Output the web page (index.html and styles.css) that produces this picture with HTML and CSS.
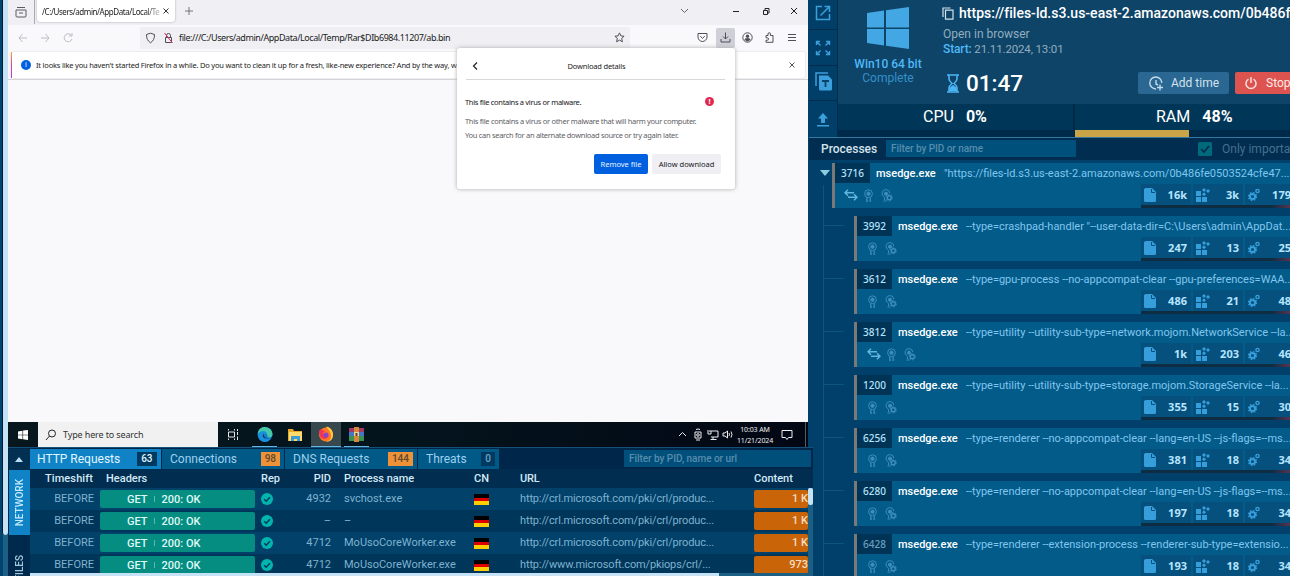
FILE: index.html
```html
<!DOCTYPE html>
<html lang="en">
<head>
<meta charset="utf-8">
<title>Sandbox analysis</title>
<link rel="stylesheet" href="styles.css">
</head>
<body>
<svg class="defs" width="0" height="0">
<symbol id="award" viewBox="0 0 11 13"><g fill="none" stroke="currentColor"><circle cx="5.500" cy="4.700" r="3.900"/><circle cx="5.500" cy="4.700" r="1.700" fill="currentColor"/><path d="M3.800 8.500v2.500M7.200 8.500v2.500M3 12h2M6.200 12h2" stroke-width="1.300"/></g></symbol>
<symbol id="awardgear" viewBox="0 0 12 13"><g fill="none" stroke="currentColor"><path d="M3.500 8.100A3.900 3.900 0 1 1 8.800 4.200M3.500 8.500v2.500M2.500 12h3"/><circle cx="5" cy="4.700" r="1.600" fill="currentColor"/><circle cx="8.300" cy="8.800" r="2" stroke-width="1.400"/><circle cx="8.300" cy="8.800" r="3.100" stroke-width="1" stroke-dasharray="1.620 1.620"/></g></symbol>
<symbol id="arrows" viewBox="0 0 14 12"><path d="M10 3.700H1M4 .7l-3 3 3 3M4 8.300h9M10 5.300l3 3-3 3" fill="none" stroke="currentColor" stroke-width="1.500"/></symbol>
<symbol id="file" viewBox="0 0 12 14"><path d="M2 0h6l4 4v8.500a1.500 1.500 0 0 1-1.500 1.500H1.500A1.500 1.500 0 0 1 0 12.500V1.500Q0 0 2 0z" fill="#369fdb"/><path d="M7.500 1v3.500H11" fill="none" stroke="#06507d"/></symbol>
<symbol id="blocks" viewBox="0 0 14 14"><g fill="#369fdb"><path d="M0 3h5v5H0zM0 9h5v5H0zM6 9h5v5H6z"/><path d="M8 0l2 2-2 2-2-2zM12 1l2 2-2 2-2-2zM8 4.300l2 2-2 2-2-2z"/></g></symbol>
<symbol id="gears" viewBox="0 0 12 14"><g fill="none" stroke="#369fdb"><circle cx="4.500" cy="8.500" r="2.600" stroke-width="2"/><circle cx="4.500" cy="8.500" r="4" stroke-width="1.300" stroke-dasharray="1.570 1.570"/><circle cx="9.500" cy="3" r="1.600" stroke-width="1.400"/></g></symbol>
<symbol id="check" viewBox="0 0 12 12"><circle cx="6" cy="6" r="6" fill="#00b5ad"/><path d="M3.200 6.200l2 2 3.700-4" fill="none" stroke="#003a60" stroke-width="1.500"/></symbol>
</svg>
<div class="app">
<div class="gutter"><i></i></div>
<div class="left">
 <div class="screen">
  <div class="tabstrip">
   <svg class="view" width="12" height="12" viewBox="0 0 12 12" fill="none" stroke="#5b5b66"><path d="M2 1.500h8M1 4h10v6q0 1-1 1H2q-1 0-1-1zM4 7h4"/></svg>
   <div class="tab"><span>/C:/Users/admin/AppData/Local/Te</span><svg width="6" height="6" viewBox="0 0 6 6"><path d="M.5.5l5 5M5.500.5l-5 5" stroke="#333"/></svg></div>
   <svg class="plus" width="8" height="8" viewBox="0 0 8 8"><path d="M4 0v8M0 4h8" stroke="#777"/></svg>
   <svg class="wins" width="122" height="10" viewBox="0 0 122 10" fill="none" stroke="#222"><path d="M1 3l3.500 3.500L8 3" stroke="#666"/><path d="M53 5.500h6M83.500 4.500h4v4h-4zM85 4V2.500h4V7H88M111 2l6 6M117 2l-6 6"/></svg>
  </div>
  <div class="toolbar">
   <svg class="nav" width="56" height="12" viewBox="0 0 56 12" fill="none" stroke="#bdbdc3"><path d="M9 6H1M4.500 2L1 6l3.500 4M23 6h8M27.500 2L31 6l-3.500 4M53.500 3.500A4 4 0 1 0 54 7M54 1v3h-3"/></svg>
   <div class="urlbar">
    <svg width="30" height="12" viewBox="0 0 30 12" fill="none" stroke="#4f4f59"><path d="M4.500 1.200l4 1.300c0 4-1 6.300-4 8.300-3-2-4-4.300-4-8.300z"/><path d="M20.500 5V3.500a2 2 0 0 1 4 0V5M19.500 5.500h6v5h-6z"/><path d="M18.500 1l8 10" stroke="#e22850"/></svg>
    <span>file:///C:/Users/admin/AppData/Local/Temp/Rar$DIb6984.11207/ab.bin</span>
    <svg class="star" width="11" height="11" viewBox="0 0 11 11" fill="none" stroke="#4f4f59"><path d="M5.500.9l1.400 3 3.200.3-2.400 2.200.7 3.400-2.900-1.700-2.900 1.700.7-3.400L.9 4.200l3.200-.3z"/></svg>
   </div>
   <div class="tools">
    <svg width="11" height="11" viewBox="0 0 11 11" fill="none" stroke="#4f4f59"><path d="M1 1.500h9V5a4.500 4.500 0 0 1-9 0zM3.300 4.300l2.200 2 2.200-2"/></svg>
    <b><svg width="11" height="11" viewBox="0 0 11 11" fill="none" stroke="#4f4f59"><path d="M5.500.5v6.500M3 4.500L5.500 7 8 4.500M1 7v3h9V7"/></svg></b>
    <svg width="11" height="11" viewBox="0 0 11 11"><circle cx="5.500" cy="5.500" r="4.700" fill="none" stroke="#4f4f59"/><circle cx="5.500" cy="4.200" r="1.700" fill="#4f4f59"/><path d="M2.500 8q0-2 3-2t3 2l-3 1.500z" fill="#4f4f59"/></svg>
    <svg width="11" height="11" viewBox="0 0 11 11" fill="none" stroke="#4f4f59"><path d="M2 3.500h2V2q0-1.300 1.200-1.300T6.400 2v1.500H9v6.800H2V8.200h1.500q1-.1 1-1.200t-1-1.200H2z"/></svg>
    <svg width="11" height="11" viewBox="0 0 11 11" stroke="#4f4f59"><path d="M2 2.500h8M2 5.500h8M2 8.500h8"/></svg>
   </div>
  </div>
  <div class="notice"><i>i</i><span>It looks like you haven't started Firefox in a while. Do you want to clean it up for a fresh, like-new experience? And by the way, w</span><svg width="6" height="6" viewBox="0 0 6 6"><path d="M.5.5l5 5M5.500.5l-5 5" stroke="#555"/></svg></div>
  <div class="page"></div>
  <div class="popup">
   <div class="phead"><svg width="6" height="8" viewBox="0 0 6 8"><path d="M5 .5L1.500 4 5 7.500" fill="none" stroke="#222" stroke-width="1.200"/></svg><span>Download details</span></div>
   <div class="virus"><span>This file contains a virus or malware.</span><i>!</i></div>
   <p class="l1">This file contains a virus or other malware that will harm your computer.</p>
   <p class="l2">You can search for an alternate download source or try again later.</p>
   <div class="btns"><b>Remove file</b><b class="allow">Allow download</b></div>
  </div>
  <div class="taskbar">
   <svg class="start" width="10" height="10" viewBox="0 0 10 10" fill="#fff"><path d="M0 1.400l4.500-.7v4H0zM5.100.6L10 0v4.700H5.100zM0 5.300h4.500v4L0 8.600zM5.100 5.300H10V10l-4.900-.7z"/></svg>
   <div class="search"><svg width="12" height="12" viewBox="0 0 12 12" fill="none" stroke="#222"><circle cx="7" cy="4.500" r="3.500"/><path d="M4.500 7L1 11"/></svg><span>Type here to search</span></div>
   <svg class="icons" width="160" height="25" viewBox="0 0 160 25">
    <g fill="none" stroke="#e5e8ea"><path d="M10.500 10h6v5h-6zM10.500 7v1.500M16.500 7v1.500M10.500 16.500V18M16.500 16.500V18M19.500 7v2M19.500 10v3M19.500 14.500V18"/></g>
    <circle cx="47" cy="12.500" r="7.500" fill="#127ac6"/><path d="M40 10a7.500 7.500 0 0 1 14.500 2c0 3-2.500 4-5 3 1-4-4-5-9.500-2z" fill="#45c8a8"/><path d="M40 12c2-4 9-4 9 0-4-1-5 4-1 5 2 .5 4 0 5-1-2 5-11 6-13-2z" fill="#1a91da"/><path d="M46 11.500c-3 3 0 6 6 5q-3 1-5-1t-1-4z" fill="#072c50"/>
    <path d="M70 7h5l1 2h8v10H70z" fill="#e8a82c"/><path d="M71 10h13v9H71z" fill="#ffdb6b"/><path d="M73 14h9v5h-3v-2h-3v2h-3z" fill="#3d9bd6"/>
    <path d="M93 0h30v25H93z" fill="#37484e"/><circle cx="108" cy="12.500" r="7" fill="#ff7626"/><path d="M108 5c3-1 7 3 7 8s-4 7-7 7q6-2 5-7t-5-8z" fill="#ffcf3a"/><path d="M101 9q2-3 3-1l3 1-2 2 2 3q4 1 4-2-1 5-5 5-5-1-5-8z" fill="#f23554"/><circle cx="108" cy="13" r="2.500" fill="#8545cc"/>
    <path d="M131 6h15v5h-15z" fill="#a13b63"/><path d="M131 10h15v5h-15z" fill="#4675c5"/><path d="M131 14h15v5h-15z" fill="#399252"/><path d="M136 5h5v15h-5z" fill="#d6873c"/><path d="M136 10h5v4h-5z" fill="#ead48b"/><path d="M137.500 11h2v3h-2z" fill="#5d402d"/>
    <path d="M34 24.500h25M93 24.500h30M126 24.500h25" stroke="#64b5e4"/>
   </svg>
   <svg class="tray" width="56" height="13" viewBox="0 0 56 13" fill="none" stroke="#eee"><path d="M1 8l3.500-3.500L8 8M17 4h6v6h-6zM18 1.500q2-1 4 0M18 12h4M31 3h9v6h-7M30 2v4h3V3M35 9v2M32.500 11.500h6M45 5h2l2.500-2v7L47 8h-2zM51 5q1 1.500 0 3M53 3.500q2 3 0 6"/><circle cx="20" cy="7" r="1.300"/></svg>
   <div class="clock"><span>10:03 AM</span><span>11/21/2024</span></div>
   <svg class="note" width="12" height="12" viewBox="0 0 12 12" fill="none" stroke="#eee"><path d="M1 1.500h10v7H7.500L6 10.500 4.500 8.500H1z"/></svg>
   <i class="edge"></i>
  </div>
 </div>
 <div class="net">
  <div class="side"><div class="up"><i></i></div><div class="vt on"><span>NETWORK</span></div><div class="vt"><span>FILES</span></div></div>
  <div class="table">
   <div class="tabs"><div class="t t1 on">HTTP Requests<b>63</b></div><div class="t t2">Connections<b class="o">98</b></div><div class="t t3">DNS Requests<b class="o">144</b></div><div class="t t4">Threats<b class="z">0</b></div><div class="filter">Filter by PID, name or url</div></div>
   <div class="tr th"><span>Timeshift</span><span>Headers</span><span>Rep</span><span>PID</span><span>Process name</span><span>CN</span><span>URL</span><span>Content</span></div>
   <div class="tr"><span>BEFORE</span><span class="get"><b>GET</b><i></i><b>200: OK</b></span><svg width="12" height="12"><use href="#check"/></svg><span>4932</span><span>svchost.exe</span><em class="flag"></em><span>http://crl.microsoft.com/pki/crl/produc...</span><span class="size">1 K</span></div>
   <div class="tr"><span>BEFORE</span><span class="get"><b>GET</b><i></i><b>200: OK</b></span><svg width="12" height="12"><use href="#check"/></svg><span>–</span><span>–</span><em class="flag"></em><span>http://crl.microsoft.com/pki/crl/produc...</span><span class="size">1 K</span></div>
   <div class="tr"><span>BEFORE</span><span class="get"><b>GET</b><i></i><b>200: OK</b></span><svg width="12" height="12"><use href="#check"/></svg><span>4712</span><span>MoUsoCoreWorker.exe</span><em class="flag"></em><span>http://crl.microsoft.com/pki/crl/produc...</span><span class="size">1 K</span></div>
   <div class="tr"><span>BEFORE</span><span class="get"><b>GET</b><i></i><b>200: OK</b></span><svg width="12" height="12"><use href="#check"/></svg><span>4712</span><span>MoUsoCoreWorker.exe</span><em class="flag"></em><span>http://www.microsoft.com/pkiops/crl/...</span><span class="size">973</span></div>
   <div class="hbar"><i></i></div><div class="vbar"><i></i></div>
  </div>
 </div>
</div>
<div class="right">
 <div class="top">
  <div class="rail">
   <div><svg width="16" height="16" viewBox="0 0 16 16" fill="none" stroke="#3b9fdb" stroke-width="1.500"><path d="M7 1.500H1.500v13h13V9M9.500 1.500h5V7M14 2L5.500 10.500"/></svg></div>
   <div><svg width="16" height="16" viewBox="0 0 16 16" stroke="#3b9fdb" fill="none" stroke-width="1.400"><path d="M1.500 5V1.500H5M1.500 1.500L5.500 5.500M11 1.500h3.500V5M14.500 1.500L10.500 5.500M1.500 11v3.500H5M1.500 14.500L5.500 10.500M14.500 11v3.500H11M14.500 14.500L10.500 10.500"/></svg></div>
   <div><svg width="17" height="19" viewBox="0 0 17 19"><path d="M1 14V1h12" fill="none" stroke="#3b9fdb" stroke-width="1.500"/><path d="M4 3.500h9l4 4V17q0 1.500-1.500 1.500h-10Q4 18.500 4 17z" fill="#3b9fdb"/><path d="M7 9h7M10.500 9v6" stroke="#0a4269" stroke-width="1.800"/></svg></div>
   <div><svg width="12" height="15" viewBox="0 0 12 15" fill="#3b9fdb"><path d="M6 1l5 5.500H8V11H4V6.500H1zM0 13h12v1.500H0z"/></svg></div>
  </div>
  <div class="summary">
   <div class="info">
    <div class="os"><svg width="42" height="42" viewBox="0 0 42 42" fill="#42a7e2"><path d="M0 6l17-2.500v17H0zM19 3.200L42 0v20.500H19zM0 22h17v16.500L0 36zM19 22h23v20l-23-3.200z"/></svg><b>Win10 64 bit</b><span>Complete</span></div>
    <div class="task">
     <div class="url"><svg width="12" height="13" viewBox="0 0 12 13" fill="none" stroke="#d4e2ec" stroke-width="1.200"><path d="M1 10V1h7.500M3.500 3.200H11v9H3.500z"/></svg><span>https://files-ld.s3.us-east-2.amazonaws.com/0b486f</span></div>
     <div class="open">Open in browser</div>
     <div class="started"><b>Start:</b> 21.11.2024, 13:01</div>
     <div class="act"><svg width="12" height="19" viewBox="0 0 12 19"><path d="M0 1h12M0 18h12M2 1v4q0 2 3 4.500-3 2.500-3 4.500v4M10 1v4q0 2-3 4.500 3 2.500 3 4.500v4" stroke="#4cb5f4" stroke-width="1.600" fill="none"/><path d="M6 11q4 2 4 6H2q0-4 4-6z" fill="#4cb5f4"/></svg><strong>01:47</strong>
      <span class="btn add"><svg width="14" height="15" viewBox="0 0 14 15" fill="none" stroke="#c4dbea" stroke-width="1.400"><path d="M12.800 7A6 6 0 1 0 7 13M7 4v4l2 1M8 11.500h6M11 8.500v6"/></svg>Add time</span><span class="btn stop"><svg width="12" height="13" viewBox="0 0 12 13" fill="none" stroke="#fbdedd" stroke-width="1.500"><path d="M3.500 2.200a5 5 0 1 0 5 0M6 0v6"/></svg>Stop</span></div>
    </div>
   </div>
   <div class="meters"><div class="m cpu"><span>CPU</span><b>0%</b></div><div class="m ram"><span>RAM</span><b>48%</b></div></div>
  </div>
 </div>
 <div class="ph"><b>Processes</b><span class="pf">Filter by PID or name</span><svg width="14" height="14" viewBox="0 0 14 14"><rect width="14" height="14" rx="1.500" fill="#006a7c"/><path d="M3 7l3 3 5-6" fill="none" stroke="#00294a" stroke-width="1.600"/></svg><span class="imp">Only important</span></div>
 <div class="tree">
  <i class="caret"></i><i class="trunk"></i>
  <div class="node root"><div class="n1"><span class="pid">3716</span><b>msedge.exe</b><span class="cmd">"https://files-ld.s3.us-east-2.amazonaws.com/0b486fe0503524cfe47...</span></div><div class="n2"><svg class="ar" width="14" height="12"><use href="#arrows"/></svg><svg width="11" height="13"><use href="#award"/></svg><svg width="12" height="13"><use href="#awardgear"/></svg><div class="stats"><span><svg width="12" height="14"><use href="#file"/></svg>16k</span><span><svg width="14" height="14"><use href="#blocks"/></svg>3k</span><span><svg width="12" height="14"><use href="#gears"/></svg>179</span></div></div></div>
  <div class="node"><div class="n1"><span class="pid">3992</span><b>msedge.exe</b><span class="cmd">--type=crashpad-handler "--user-data-dir=C:\Users\admin\AppDat...</span></div><div class="n2"><svg width="11" height="13"><use href="#award"/></svg><svg width="12" height="13"><use href="#awardgear"/></svg><div class="stats"><span><svg width="12" height="14"><use href="#file"/></svg>247</span><span><svg width="14" height="14"><use href="#blocks"/></svg>13</span><span><svg width="12" height="14"><use href="#gears"/></svg>25</span></div></div></div>
  <div class="node"><div class="n1"><span class="pid">3612</span><b>msedge.exe</b><span class="cmd">--type=gpu-process --no-appcompat-clear --gpu-preferences=WAA...</span></div><div class="n2"><svg width="11" height="13"><use href="#award"/></svg><svg width="12" height="13"><use href="#awardgear"/></svg><div class="stats"><span><svg width="12" height="14"><use href="#file"/></svg>486</span><span><svg width="14" height="14"><use href="#blocks"/></svg>21</span><span><svg width="12" height="14"><use href="#gears"/></svg>48</span></div></div></div>
  <div class="node"><div class="n1"><span class="pid">3812</span><b>msedge.exe</b><span class="cmd">--type=utility --utility-sub-type=network.mojom.NetworkService --la...</span></div><div class="n2"><svg class="ar" width="14" height="12"><use href="#arrows"/></svg><svg width="11" height="13"><use href="#award"/></svg><svg width="12" height="13"><use href="#awardgear"/></svg><div class="stats"><span><svg width="12" height="14"><use href="#file"/></svg>1k</span><span><svg width="14" height="14"><use href="#blocks"/></svg>203</span><span><svg width="12" height="14"><use href="#gears"/></svg>46</span></div></div></div>
  <div class="node"><div class="n1"><span class="pid">1200</span><b>msedge.exe</b><span class="cmd">--type=utility --utility-sub-type=storage.mojom.StorageService --la...</span></div><div class="n2"><svg width="11" height="13"><use href="#award"/></svg><svg width="12" height="13"><use href="#awardgear"/></svg><div class="stats"><span><svg width="12" height="14"><use href="#file"/></svg>355</span><span><svg width="14" height="14"><use href="#blocks"/></svg>15</span><span><svg width="12" height="14"><use href="#gears"/></svg>30</span></div></div></div>
  <div class="node"><div class="n1"><span class="pid">6256</span><b>msedge.exe</b><span class="cmd">--type=renderer --no-appcompat-clear --lang=en-US --js-flags=--ms...</span></div><div class="n2"><svg width="11" height="13"><use href="#award"/></svg><svg width="12" height="13"><use href="#awardgear"/></svg><div class="stats"><span><svg width="12" height="14"><use href="#file"/></svg>381</span><span><svg width="14" height="14"><use href="#blocks"/></svg>18</span><span><svg width="12" height="14"><use href="#gears"/></svg>34</span></div></div></div>
  <div class="node"><div class="n1"><span class="pid">6280</span><b>msedge.exe</b><span class="cmd">--type=renderer --no-appcompat-clear --lang=en-US --js-flags=--ms...</span></div><div class="n2"><svg width="11" height="13"><use href="#award"/></svg><svg width="12" height="13"><use href="#awardgear"/></svg><div class="stats"><span><svg width="12" height="14"><use href="#file"/></svg>197</span><span><svg width="14" height="14"><use href="#blocks"/></svg>18</span><span><svg width="12" height="14"><use href="#gears"/></svg>34</span></div></div></div>
  <div class="node"><div class="n1"><span class="pid dim">6428</span><b>msedge.exe</b><span class="cmd">--type=renderer --extension-process --renderer-sub-type=extensio...</span></div><div class="n2"><svg width="11" height="13"><use href="#award"/></svg><svg width="12" height="13"><use href="#awardgear"/></svg><div class="stats"><span><svg width="12" height="14"><use href="#file"/></svg>193</span><span><svg width="14" height="14"><use href="#blocks"/></svg>18</span><span><svg width="12" height="14"><use href="#gears"/></svg>34</span></div></div></div>
 </div>
</div>
</div>
</body>
</html>
```

FILE: styles.css
```css
* { box-sizing: border-box; }
body { margin: 0; font-family: Roboto, sans-serif; overflow: hidden; }
i, em { font-style: normal; }
svg { flex: none; display: block; }
.defs { position: absolute; }
.app { display: flex; width: 1290px; height: 576px; overflow: hidden; background: #00406a; white-space: nowrap; }
.gutter { width: 8px; flex: none; background: #00456f; border-right: 5px solid #1b5f85; padding: 0; position: relative; }
.gutter i { display: block; position: absolute; left: 2px; top: 0; width: 6px; height: 535px; background: #c5e3f5; border-left: 1px solid #001c35; border-radius: 0 0 3px 3px; }
.left { width: 800px; flex: none; z-index: 1; }

.screen { position: relative; height: 447px; background: #f9f9fb; font-family: "Noto Sans", sans-serif; color: #222; }
.tabstrip { height: 25px; background: #f0eff4; display: flex; align-items: center; }
.view { margin: -2px 8px 0 7px; }
.tab { margin: -3px 0 0 2px; height: 22px; width: 138px; background: #fff; border-radius: 0 0 3px 3px; box-shadow: 0 0 2px #999; display: flex; align-items: center; padding-left: 5px; font-size: 8px; position: relative; letter-spacing: -.42px; }
.view + .tab::before { content: ""; position: absolute; left: -3px; top: 0; height: 24px; border-left: 1px solid #aaaab3; }
.tab span { width: 118px; overflow: hidden; margin-right: 3px; -webkit-mask-image: linear-gradient(90deg, #000 88%, transparent 104%); }
.plus { margin: -3px 0 0 10px; }
.wins { margin: -3px 6px 0 auto; }
.toolbar { height: 25px; display: flex; align-items: center; }
.nav { margin-left: 10px; }
.urlbar { margin-left: 66px; width: 490px; height: 22px; background: #f0f0f4; display: flex; align-items: center; font-size: 9px; border-radius: 2px; padding-left: 6px; letter-spacing: -.43px; }
.urlbar span { margin-left: 3px; }
.star { margin-left: auto; margin-right: 5px; }
.tools { display: flex; align-items: center; margin-left: 67px; }
.tools b { width: 19px; height: 20px; background: #cfcfd8; border-radius: 2px; display: flex; align-items: center; justify-content: center; margin: 0 7px 0 8px; }
.tools > svg + svg { margin-left: 11px; }
.notice { height: 26px; margin: 2px 3px 0 3px; border-left: 1px solid #e6418b; background: #fff; box-shadow: 0 0 2px #ccc; border-radius: 2px; display: flex; align-items: center; font-size: 7.500px; border-image: linear-gradient(#ffa436, #e6418b, #ad3bff) 1; }
.notice i { width: 10px; height: 10px; border-radius: 50%; background: #0060df; color: #fff; text-align: center; line-height: 10px; margin: 0 5px 0 9px; font-size: 7px; }
.notice span { letter-spacing: -.2px; }
.notice svg { margin-left: auto; margin-right: 10px; }
.page { margin-top: 1px; border-top: 1px solid #d4d4d8; height: 343px; }
.popup { position: absolute; left: 449px; top: 48px; width: 278px; height: 141px; background: #fff; border-radius: 3px; box-shadow: 0 0 4px #aaa; padding: 0 10px 0 8px; font-size: 7.500px; }
.popup p { margin: 0; color: #606066; line-height: 14px; letter-spacing: -.3px; }
.phead { height: 32px; display: flex; align-items: center; border-bottom: 1px solid #d7d7db; padding: 4px 0 0 6px; margin-left: 1px; letter-spacing: -.18px; }
.phead span { margin: auto; padding-right: 10px; }
.virus { display: flex; height: 14px; align-items: center; margin-top: 15px; letter-spacing: -.31px; color: #15141a; }
.virus i { width: 9px; height: 9px; border-radius: 50%; background: #e22850; color: #fff; font-weight: 700; line-height: 9px; text-align: center; margin: -2px 11px 0 auto; }
.popup .l1 { margin-top: 6px; line-height: 13px; }
.btns { display: flex; gap: 4px; margin: 12px 4px 0 0; justify-content: flex-end; }
.btns b { width: 54px; height: 20px; line-height: 20px; border-radius: 2px; background: #0060df; color: #e8f2ff; text-align: center; font-weight: 400; }
.btns b.allow { width: 69px; background: #f0f0f4; color: #15141a; }
.taskbar { position: absolute; left: 0; right: 0; top: 422px; height: 25px; background: linear-gradient(90deg, #08171d, #04141d 50%, #020714); display: flex; align-items: center; }
.start { margin: 0 10px; }
.search { width: 180px; height: 25px; background: #f1f1f1; display: flex; align-items: center; padding-left: 7px; font-size: 9px; color: #333; }
.search span { margin-left: 6px; letter-spacing: -.13px; }
.tray { margin-left: 300px; }
.clock { display: flex; flex-direction: column; align-items: center; width: 42px; font-size: 7px; line-height: 11px; color: #eee; letter-spacing: -.1px; }
.note { margin-left: 5px; }
.edge { border-left: 1px solid #555b66; height: 25px; margin-left: auto; margin-right: 2px; }

.net { width: 805px; height: 129px; background: #00264a; border-top: 1px solid #145078; padding: 1px 0 0 1px; display: flex; position: relative; }
.side { width: 21px; background: #002a4d; flex: none; }
.up { height: 21px; background: #023053; padding: 8px 0 0 6px; }
.up i { display: block; border: 4.500px solid transparent; border-top: 0; border-bottom: 5px solid #b8def5; width: 0; }
.vt { height: 65px; display: flex; align-items: center; justify-content: center; color: #a6c6da; font-size: 10px; font-weight: 500; }
.vt.on { background: #0f83c5; color: #c5eaff; }
.vt span { writing-mode: vertical-rl; transform: rotate(180deg); }
.table { width: 783px; position: relative; overflow: hidden; }
.tabs { display: flex; height: 20px; gap: 1px; }
.t { flex: none; background: #005987; color: #9ed0ef; font-size: 12px; line-height: 20px; display: flex; align-items: center; padding-left: 8px; }
.t.on { background: #0f83c5; color: #e0f5ff; padding-left: 7px; }
.t b { margin: 0 4px 0 auto; background: #013a60; font-weight: 500; font-size: 10px; line-height: 14px; padding: 0 4.500px; }
.t b.o { background: #ee9137; color: #5a4a33; padding: 0 4px; }
.t b.z { color: #6ba8cb; padding: 0 4px; }
.t1 { width: 131px; }
.t2 { width: 122px; }
.t3 { width: 132px; }
.t4 { width: 81px; }
.filter { flex: none; margin: 1px 0 0 124px; width: 187px; height: 17px; background: #004f7b; color: #568cac; font-size: 10px; font-weight: 500; line-height: 17px; padding-left: 5px; letter-spacing: -.04px; }
.tr { height: 22px; background: #01416a; display: grid; grid-template-columns: 64px 6px 155px 6px 22px 48px 13px 130px 46px 234px 54px; align-items: center; color: #7fb2d0; font-size: 11px; }
.tr > :nth-child(1) { grid-column: 1; text-align: right; }
.tr > :nth-child(2) { grid-column: 3; }
.tr > :nth-child(3) { grid-column: 5; }
.tr > :nth-child(4) { grid-column: 6; text-align: right; }
.tr > :nth-child(5) { grid-column: 8; }
.tr > :nth-child(6) { grid-column: 9; }
.tr > :nth-child(7) { grid-column: 10; letter-spacing: -.14px; }
.tr > :nth-child(8) { grid-column: 11; }
.tr > span:not(.get):not(.size) { padding-bottom: 2px; }
.tr:nth-child(even) { background: #003659; }
.tr:nth-child(odd) { background: #01416a; }
.tr.th { height: 19px; background: #002d50; color: #d3e9f6; font-weight: 500; }
.tr.th > span:not(.get):not(.size) { padding-bottom: 0; }
.th > :nth-child(1) { padding-right: 1px; letter-spacing: .1px; }
.th > :nth-child(2) { padding-left: 6px; }
.get { height: 18px; border-radius: 2px; background: #068d82; color: #dff9f6; display: flex; align-items: center; padding-left: 27px; }
.get b { font-weight: 500; }
.get i { border-left: 1px solid #55bab0; height: 6px; margin: 0 7px 0 6px; }
.flag { width: 15px; height: 11px; background: linear-gradient(#000 0 33%, #d00 33% 67%, #ffce00 67%); }
.size { height: 18px; border-radius: 2px; background: #c96408; color: #f5ddc5; line-height: 18px; text-align: right; font-weight: 500; }
.hbar { position: absolute; left: 0; bottom: 0; width: 778px; height: 3px; background: #1b5f85; }
.hbar i { display: block; width: 689px; height: 3px; background: #c5e3f5; }
.vbar { position: absolute; left: 778px; top: 39px; width: 5px; height: 88px; background: #1b5f85; }
.vbar i { display: block; height: 17px; border-radius: 2px; background: #c5e3f5; }

.right { width: 487px; flex: none; margin-left: 1px; }
.top { display: flex; height: 138px; border-bottom: 1px solid #3678a0; }
.rail { width: 29px; flex: none; border-right: 1px solid #032c4c; background: #023f68; display: flex; flex-direction: column; gap: 1px; }
.rail div { height: 35px; border-bottom: 1px solid #002b4b; display: flex; align-items: center; justify-content: center; }
.rail div:first-child { height: 30px; padding-bottom: 4px; }
.rail div:last-child { border: 0; }
.rail div:nth-child(3) { height: 34px; padding-bottom: 5px; }
.summary { flex: 1; background: #0e4468; }
.info { height: 104px; display: flex; }
.os { width: 100px; flex: none; padding-top: 7px; display: flex; flex-direction: column; align-items: center; font-size: 12px; color: #3590c8; line-height: 14px; }
.os b { color: #50b8f8; font-weight: 500; margin-top: 8px; }
.task { padding: 4px 0 0 5px; color: #91adbf; font-size: 12px; }
.url { display: flex; align-items: center; color: #fff; font-size: 14px; font-weight: 500; height: 18px; gap: 5px; margin-left: -1px; letter-spacing: .01px; }
.open { line-height: 16px; margin-top: 4px; }
.started { line-height: 14px; font-size: 11.500px; letter-spacing: -.14px; }
.started b { color: #50b8f8; font-weight: 500; font-size: 12px; }
.act { display: flex; align-items: center; height: 24px; margin: 15px 0 0 4px; }
.act strong { font-size: 22.500px; font-weight: 500; color: #fff; margin-left: 7px; width: 172px; flex: none; }
.btn { flex: none; height: 22px; background: #2a6793; color: #d3e2ed; display: flex; align-items: center; border-radius: 2px; width: 91px; padding-left: 11px; gap: 8px; }
.stop { background: #dc5350; color: #ffe9e8; margin-left: 6px; padding-left: 10px; gap: 9px; }
.meters { display: flex; height: 33px; border-bottom: 7px solid #002a49; background: #003759; }
.m { display: flex; position: relative; height: 26px; line-height: 25px; font-size: 16px; color: #fff; }
.m b { font-weight: 700; margin-left: 12px; }
.cpu { width: 237px; padding-left: 85px; border-right: 2px solid #002746; }
.ram { width: 222px; padding-left: 81px; }
.ram::after { content: ""; position: absolute; left: 0; top: 26px; width: 114px; height: 7px; background: #c9a548; }
.ph { height: 22px; background: #002d50; display: flex; align-items: center; padding-left: 12px; font-size: 12px; }
.ph b { font-weight: 500; color: #d5e2ea; width: 65px; flex: none; }
.pf { flex: none; width: 190px; height: 17px; line-height: 17px; background: #00507c; color: #568cac; font-size: 10px; font-weight: 500; padding-left: 5px; margin: -1px 122px 0 0; letter-spacing: -.06px; }
.imp { color: #46708d; margin-left: 10px; }
.tree { position: relative; height: 416px; padding-top: 3px; overflow: hidden; }
.caret { position: absolute; left: 11px; top: 10px; border: 5px solid transparent; border-top: 6px solid #88d0df; border-bottom: 0; }
.trunk { position: absolute; left: 14px; top: 25px; height: 391px; border-left: 1px solid #0c5580; }
.node { position: relative; margin: 0 0 8px 45px; height: 45px; border-left: 3px solid #7b7978; background: #035b89; }
.node.root { margin-left: 23px; }
.node:not(.root)::before { content: ""; position: absolute; left: -33px; top: 9px; width: 20px; border-top: 1px solid #0c5580; }
.n1 { height: 20px; display: flex; align-items: center; }
.pid { flex: none; width: 35px; height: 20px; background: #003457; color: #b5e3fb; font: 500 10px/20px "Noto Sans", sans-serif; text-align: center; }
.pid.dim { color: #6b9fbd; }
.n1 b { flex: none; width: 59px; margin: 0 9px 0 6px; font-size: 11px; font-weight: 500; color: #fff; }
.cmd { color: #80c6ef; font-size: 11px; }
.n2 { height: 25px; display: flex; padding: 6px 0 0 10px; color: #3d8ebb; gap: 7px; }
.root .n2 { padding-left: 9px; }
.n2 .ar { color: #62b5dd; margin-right: -2px; }
.stats { margin: -5px 0 0 auto; width: 155px; height: 24px; border-bottom: 3px solid #0e2d43; border-image: linear-gradient(90deg, #0e2d43 84%, #743650 100%) 1; display: flex; gap: 2px; }
.stats span { width: 50px; height: 21px; background: #06507d; display: flex; align-items: center; justify-content: space-between; padding: 0 4px 0 3px; color: #b5e5ff; font: 700 11px "Noto Sans", sans-serif; }
```
